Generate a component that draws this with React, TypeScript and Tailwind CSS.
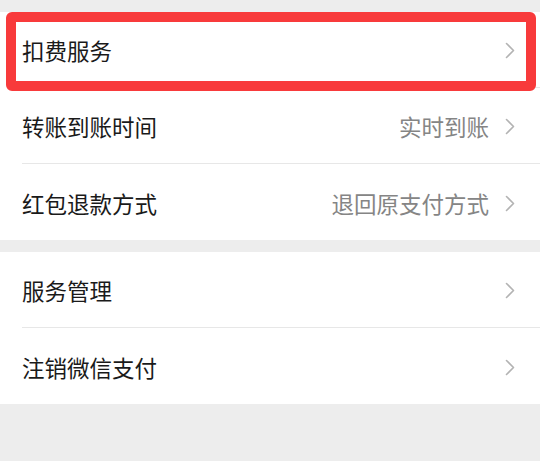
import type { ReactNode } from "react";

function Chevron() {
  return (
    <svg width="10" height="17" viewBox="0 0 10 17" fill="none" className="shrink-0">
      <path d="M1.5 1.5L8.5 8.5L1.5 15.5" stroke="#b3b3b3" strokeWidth="1.6" strokeLinecap="round" strokeLinejoin="round" />
    </svg>
  );
}

function Row({ label, value, last, children }: { label: string; value?: string; last?: boolean; children?: ReactNode }) {
  return (
    <div className="relative h-[76px] pl-[22px]">
      <div className={`flex h-full items-center pr-[25px] pt-[2px] ${last ? "" : "border-b border-[#e7e7e7]"}`}>
        <span className="flex-1 text-[22.5px] leading-none text-[#1a1a1a]">{label}</span>
        {value && <span className="mr-[16px] text-[22.5px] leading-none text-[#858585]">{value}</span>}
        {!value && <span className="mr-[16px]" />}
        <Chevron />
      </div>
      {children}
    </div>
  );
}

export default function App() {
  return (
    <div
      className="min-h-[461px] bg-[#ededed] pt-[12px]"
      style={{ fontFamily: '"Noto Sans CJK SC", "Noto Sans", sans-serif' }}
    >
      <div className="bg-white">
        <Row label="扣费服务">
          {/* highlight around the first row */}
          <div className="pointer-events-none absolute left-[6px] right-[4px] top-0 bottom-[-3px] rounded-[6px] border-[10px] border-[#f83a3b]" />
        </Row>
        <Row label="转账到账时间" value="实时到账" />
        <Row label="红包退款方式" value="退回原支付方式" last />
      </div>
      <div className="mt-[12px] bg-white">
        <Row label="服务管理" />
        <Row label="注销微信支付" last />
      </div>
    </div>
  );
}
